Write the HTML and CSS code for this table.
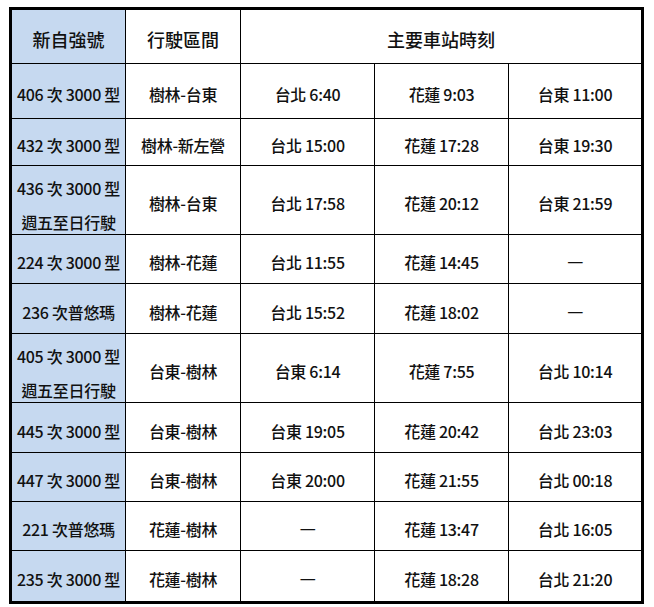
FILE: index.html
```html
<!DOCTYPE html>
<html lang="zh-Hant">
<head>
<meta charset="utf-8">
<title>列車時刻</title>
<link rel="stylesheet" href="styles.css">
</head>
<body>
<div class="page">
<table class="timetable">
  <colgroup>
    <col class="c-train">
    <col class="c-route">
    <col class="c-stop">
    <col class="c-stop">
    <col class="c-last">
  </colgroup>
  <thead>
    <tr class="r-head">
      <th class="train">新自強號</th>
      <th>行駛區間</th>
      <th colspan="3" class="last">主要車站時刻</th>
    </tr>
  </thead>
  <tbody>
    <tr class="r55">
      <td class="train">406 次 3000 型</td>
      <td>樹林-台東</td>
      <td>台北 6:40</td>
      <td>花蓮 9:03</td>
      <td class="last">台東 11:00</td>
    </tr>
    <tr class="r47">
      <td class="train">432 次 3000 型</td>
      <td>樹林-新左營</td>
      <td>台北 15:00</td>
      <td>花蓮 17:28</td>
      <td class="last">台東 19:30</td>
    </tr>
    <tr class="r69">
      <td class="train two"><span>436 次 3000 型</span><span>週五至日行駛</span></td>
      <td>樹林-台東</td>
      <td>台北 17:58</td>
      <td>花蓮 20:12</td>
      <td class="last">台東 21:59</td>
    </tr>
    <tr class="r49">
      <td class="train">224 次 3000 型</td>
      <td>樹林-花蓮</td>
      <td>台北 11:55</td>
      <td>花蓮 14:45</td>
      <td class="last"><span class="dash">一</span></td>
    </tr>
    <tr class="r50">
      <td class="train">236 次普悠瑪</td>
      <td>樹林-花蓮</td>
      <td>台北 15:52</td>
      <td>花蓮 18:02</td>
      <td class="last"><span class="dash">一</span></td>
    </tr>
    <tr class="r68">
      <td class="train two"><span>405 次 3000 型</span><span>週五至日行駛</span></td>
      <td>台東-樹林</td>
      <td>台東 6:14</td>
      <td>花蓮 7:55</td>
      <td class="last">台北 10:14</td>
    </tr>
    <tr class="r50">
      <td class="train">445 次 3000 型</td>
      <td>台東-樹林</td>
      <td>台東 19:05</td>
      <td>花蓮 20:42</td>
      <td class="last">台北 23:03</td>
    </tr>
    <tr class="r49">
      <td class="train">447 次 3000 型</td>
      <td>台東-樹林</td>
      <td>台東 20:00</td>
      <td>花蓮 21:55</td>
      <td class="last">台北 00:18</td>
    </tr>
    <tr class="r49">
      <td class="train">221 次普悠瑪</td>
      <td>花蓮-樹林</td>
      <td><span class="dash">一</span></td>
      <td>花蓮 13:47</td>
      <td class="last">台北 16:05</td>
    </tr>
    <tr class="r50 final">
      <td class="train">235 次 3000 型</td>
      <td>花蓮-樹林</td>
      <td><span class="dash">一</span></td>
      <td>花蓮 18:28</td>
      <td class="last">台北 21:20</td>
    </tr>
  </tbody>
</table>
</div>
</body>
</html>
```
FILE: styles.css
```css
html, body {
  margin: 0;
  padding: 0;
  background: #ffffff;
}

.page {
  padding: 7px 0 0 9px;
}

.timetable {
  box-sizing: border-box;
  width: 635px;
  table-layout: fixed;
  border-collapse: separate;
  border-spacing: 0;
  border: 3px solid #000;
  font-family: "Noto Sans CJK TC", "Noto Sans", sans-serif;
  font-size: 16px;
  color: #111;
}

.c-train { width: 114px; }
.c-route { width: 115px; }
.c-stop  { width: 134px; }
.c-last  { width: 132px; }

.timetable th,
.timetable td {
  box-sizing: border-box;
  padding: 6px 0 0;
  text-align: center;
  vertical-align: middle;
  line-height: 24px;
  font-weight: 500;
  letter-spacing: -0.3px;
  white-space: nowrap;
  border-right: 1px solid #000;
  border-bottom: 1px solid #000;
}

.timetable th {
  font-size: 18px;
  padding-top: 5px;
  letter-spacing: 0;
}

.timetable td.two {
  padding-top: 5px;
  line-height: 34px;
}

.two span {
  display: block;
}

.two span:last-child {
  margin-bottom: -5px;
}

.dash {
  font-weight: 400;
}

.timetable .last {
  border-right: none;
}

.timetable .final td {
  border-bottom: none;
}

.timetable .train {
  background: #c6d9f0;
}

.r-head { height: 54px; }
.r47 { height: 47px; }
.r49 { height: 49px; }
.r50 { height: 50px; }
.r55 { height: 55px; }
.r68 { height: 68px; }
.r69 { height: 69px; }
```
